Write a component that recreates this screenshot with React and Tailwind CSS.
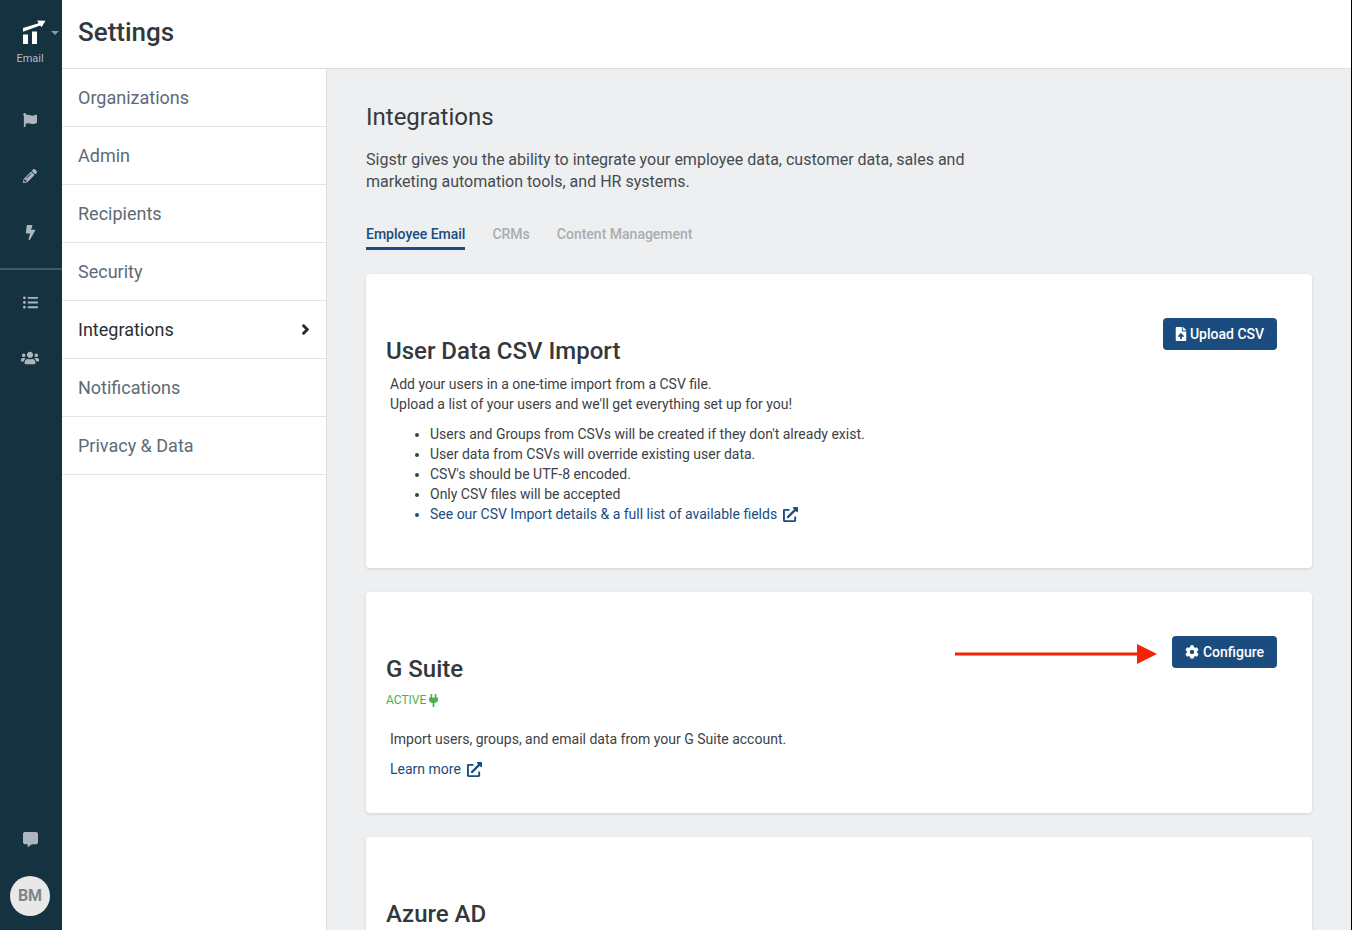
import { FaFlag, FaPencilAlt, FaBolt, FaListUl, FaUsers, FaCommentAlt, FaFileUpload, FaCog, FaExternalLinkAlt, FaChevronRight } from "react-icons/fa";

const NAV_ITEMS = ["Organizations", "Admin", "Recipients", "Security", "Integrations", "Notifications", "Privacy & Data"];

function Logo() {
    return (
        <svg width="23" height="24" viewBox="0 0 23 24" fill="#fff" className="ml-[8px]">
            <path d="M0 8 L15.5 3.2 L14.2 0.6 L22.5 0.8 L18.5 7.2 L17.2 5.4 L0 11.8 Z" />
            <rect x="0" y="14.5" width="5" height="9.5" />
            <rect x="9" y="11.5" width="5" height="12.5" />
        </svg>
    );
}

function PlugIcon() {
    return (
        <svg width="9" height="13" viewBox="0 0 9 13" fill="#4caf50">
            <rect x="1.6" y="0" width="1.6" height="4" />
            <rect x="5.8" y="0" width="1.6" height="4" />
            <path d="M0 3.6 H9 V5.4 C9 7.6 7.6 8.8 5.4 9 V13 H3.6 V9 C1.4 8.8 0 7.6 0 5.4 Z" />
        </svg>
    );
}

function SideIcon({ icon: Icon, size = 15, className = "" }) {
    return (
        <div className={`w-[60px] flex justify-center ${className}`}>
            <Icon size={size} color="#aeb6bd" />
        </div>
    );
}

function Sidebar() {
    return (
        <aside className="w-[62px] shrink-0 bg-[#14323f] flex flex-col relative">
            <div className="w-[60px] pt-[20px] flex flex-col items-center">
                <Logo />
                <span className="text-[11px] leading-[13px] mt-[8px] text-[#b4bcc2]">Email</span>
            </div>
            <div className="absolute left-[51px] top-[31px] border-x-[4px] border-x-transparent border-t-[4px] border-t-[#8a9aa2]" />
            <SideIcon icon={FaFlag} size={14} className="mt-[48px]" />
            <SideIcon icon={FaPencilAlt} size={14} className="mt-[42px]" />
            <SideIcon icon={FaBolt} size={15} className="mt-[42px]" />
            <div className="h-[2px] bg-[#3f5863] mt-[28px]" />
            <SideIcon icon={FaListUl} size={15} className="mt-[25px]" />
            <SideIcon icon={FaUsers} size={18} className="mt-[39px]" />
            <div className="w-[60px] mt-auto flex flex-col items-center pb-[14px]">
                <FaCommentAlt size={15} color="#aeb6bd" />
                <div className="mt-[29px] w-10 h-10 rounded-full bg-[#e8e8e8] flex items-center justify-center text-[16px] font-bold text-[#7d858a]">BM</div>
            </div>
        </aside>
    );
}

function SettingsNav() {
    return (
        <nav className="w-[265px] shrink-0 bg-white border-r border-[#dcdee0]">
            {NAV_ITEMS.map((item) => (
                <div key={item} className="h-[58px] border-b border-[#e2e4e6] pl-4 pr-[15px] flex items-center justify-between">
                    <span className={`text-[18px] ${item === "Integrations" ? "text-[#2b2f33]" : "text-[#5d6b75]"}`}>{item}</span>
                    {item === "Integrations" && <FaChevronRight size={11} color="#22272b" stroke="#22272b" strokeWidth={50} />}
                </div>
            ))}
        </nav>
    );
}

function Button({ icon: Icon, children, className = "" }) {
    return (
        <button className={`h-8 rounded-[4px] bg-[#1b4c80] text-white text-[14px] font-medium flex items-center justify-center ${className}`}>
            <Icon size={14} />
            {children}
        </button>
    );
}

function CsvCard() {
    return (
        <section className="bg-white rounded-[4px] shadow-[0_1px_3px_rgba(0,0,0,0.12)] h-[294px] pl-5 pr-[35px] pt-[44px]">
            <div className="flex justify-between items-start">
                <h2 className="text-[24px] font-medium leading-[28px] mt-[19px] text-[#33383c]">User Data CSV Import</h2>
                <Button icon={FaFileUpload} className="w-[114px] gap-[2px] pr-[2px]">Upload CSV</Button>
            </div>
            <div className="ml-1 mt-[9px] text-[14px] leading-[20px] text-[#3c4246]">
                <p>Add your users in a one-time import from a CSV file.</p>
                <p>Upload a list of your users and we'll get everything set up for you!</p>
                <ul className="list-disc pl-10 mt-[10px]">
                    <li>Users and Groups from CSVs will be created if they don't already exist.</li>
                    <li>User data from CSVs will override existing user data.</li>
                    <li>CSV's should be UTF-8 encoded.</li>
                    <li>Only CSV files will be accepted</li>
                    <li className="text-[#1b4c80]">
                        <span className="inline-flex items-center gap-[6px]">
                            See our CSV Import details &amp; a full list of available fields
                            <FaExternalLinkAlt size={15} />
                        </span>
                    </li>
                </ul>
            </div>
        </section>
    );
}

function GSuiteCard() {
    return (
        <section className="bg-white rounded-[4px] shadow-[0_1px_3px_rgba(0,0,0,0.12)] h-[221px] pl-5 pr-[35px] pt-[44px] relative">
            <div className="flex justify-between items-start">
                <h2 className="text-[24px] font-medium leading-[28px] mt-[19px] text-[#33383c]">G Suite</h2>
                <Button icon={FaCog} className="w-[105px] gap-[4px]">Configure</Button>
            </div>
            <div className="flex items-center gap-[3px] mt-[9px] h-4 text-[12px] leading-[16px] text-[#4caf50]">
                ACTIVE <PlugIcon />
            </div>
            <p className="ml-1 mt-[21px] text-[14px] leading-[20px] text-[#3c4246]">Import users, groups, and email data from your G Suite account.</p>
            <div className="ml-1 mt-[10px] flex items-center gap-[6px] text-[14px] leading-[20px] text-[#1b4c80]">
                Learn more <FaExternalLinkAlt size={15} />
            </div>
            {/* annotation arrow */}
            <svg className="absolute left-[588px] top-[50px]" width="204" height="24" viewBox="0 0 204 24">
                <rect x="1" y="10.5" width="184" height="3" fill="#f5220a" />
                <path d="M183 2 L203 12 L183 22 Z" fill="#f5220a" />
            </svg>
        </section>
    );
}

export default function App() {
    return (
        <div className="h-[930px] w-[1352px] flex overflow-hidden bg-white border-r border-black font-['Roboto',sans-serif]">
            <Sidebar />
            <div className="flex-1 flex flex-col min-w-0">
                <header className="h-[69px] shrink-0 border-b border-[#dcdee0] pl-4 flex items-center">
                    <h1 className="text-[26px] font-medium text-[#33383c] -mt-[3px]">Settings</h1>
                </header>
                <div className="flex flex-1 min-h-0">
                    <SettingsNav />
                    <main className="flex-1 bg-[#eeeff1] pl-[39px] pr-[39px] pt-[33px] overflow-hidden">
                        <h2 className="text-[24px] leading-[30px] text-[#33383c]">Integrations</h2>
                        <p className="mt-[17px] w-[640px] text-[16px] leading-[22px] text-[#454b50]">
                            Sigstr gives you the ability to integrate your employee data, customer data, sales and marketing automation tools, and HR systems.
                        </p>
                        <div className="flex gap-[27px] mt-[31px] text-[14px] font-medium leading-[20px] text-[#a9adb0]">
                            <span className="text-[#1b4c80] border-b-[3px] border-[#1b4c80] pb-[3px]">Employee Email</span>
                            <span>CRMs</span>
                            <span>Content Management</span>
                        </div>
                        <div className="mt-[24px] flex flex-col gap-6">
                            <CsvCard />
                            <GSuiteCard />
                            <section className="bg-white rounded-[4px] shadow-[0_1px_3px_rgba(0,0,0,0.12)] h-[200px] pl-5 pt-[63px]">
                                <h2 className="text-[24px] font-medium leading-[28px] text-[#33383c]">Azure AD</h2>
                            </section>
                        </div>
                    </main>
                </div>
            </div>
        </div>
    );
}
